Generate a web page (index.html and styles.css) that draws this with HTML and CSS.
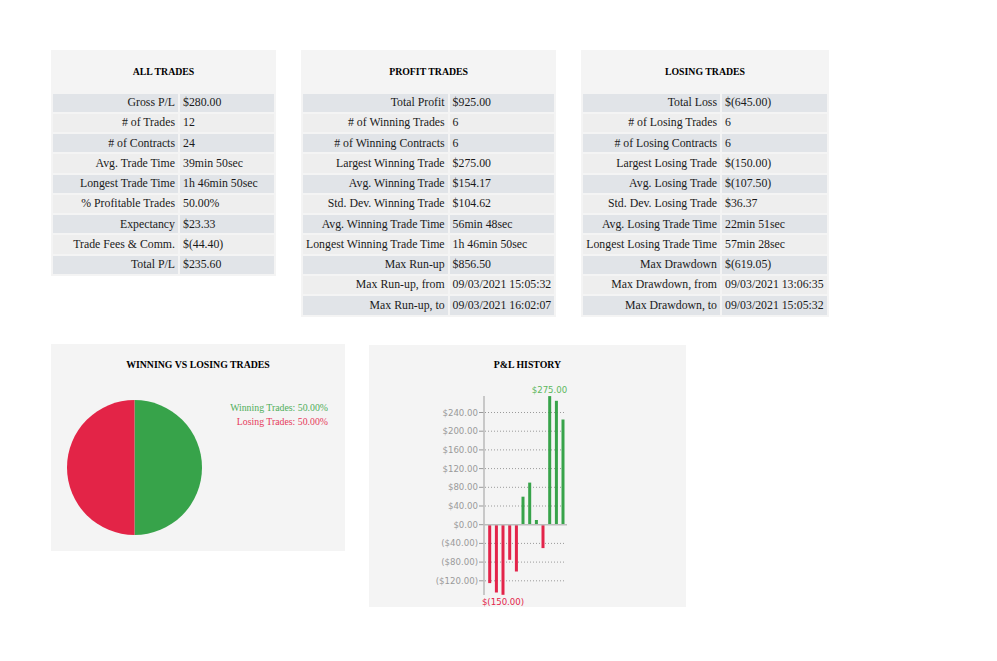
FILE: index.html
```html
<!DOCTYPE html>
<html>
<head>
<meta charset="utf-8">
<link rel="stylesheet" href="styles.css">
</head>
<body>
<div class="page">
  <div class="tables">
    <div class="card">
      <div class="card-title">ALL TRADES</div>
      <table class="stats stats-all">
        <tr><td class="lbl">Gross P/L</td><td class="val">$280.00</td></tr>
        <tr><td class="lbl"># of Trades</td><td class="val">12</td></tr>
        <tr><td class="lbl"># of Contracts</td><td class="val">24</td></tr>
        <tr><td class="lbl">Avg. Trade Time</td><td class="val">39min 50sec</td></tr>
        <tr><td class="lbl">Longest Trade Time</td><td class="val">1h 46min 50sec</td></tr>
        <tr><td class="lbl">% Profitable Trades</td><td class="val">50.00%</td></tr>
        <tr><td class="lbl">Expectancy</td><td class="val">$23.33</td></tr>
        <tr><td class="lbl">Trade Fees &amp; Comm.</td><td class="val">$(44.40)</td></tr>
        <tr><td class="lbl">Total P/L</td><td class="val">$235.60</td></tr>
      </table>
    </div>
    <div class="card">
      <div class="card-title">PROFIT TRADES</div>
      <table class="stats">
        <tr><td class="lbl">Total Profit</td><td class="val">$925.00</td></tr>
        <tr><td class="lbl"># of Winning Trades</td><td class="val">6</td></tr>
        <tr><td class="lbl"># of Winning Contracts</td><td class="val">6</td></tr>
        <tr><td class="lbl">Largest Winning Trade</td><td class="val">$275.00</td></tr>
        <tr><td class="lbl">Avg. Winning Trade</td><td class="val">$154.17</td></tr>
        <tr><td class="lbl">Std. Dev. Winning Trade</td><td class="val">$104.62</td></tr>
        <tr><td class="lbl">Avg. Winning Trade Time</td><td class="val">56min 48sec</td></tr>
        <tr><td class="lbl">Longest Winning Trade Time</td><td class="val">1h 46min 50sec</td></tr>
        <tr><td class="lbl">Max Run-up</td><td class="val">$856.50</td></tr>
        <tr><td class="lbl">Max Run-up, from</td><td class="val">09/03/2021 15:05:32</td></tr>
        <tr><td class="lbl">Max Run-up, to</td><td class="val">09/03/2021 16:02:07</td></tr>
      </table>
    </div>
    <div class="card">
      <div class="card-title">LOSING TRADES</div>
      <table class="stats">
        <tr><td class="lbl">Total Loss</td><td class="val">$(645.00)</td></tr>
        <tr><td class="lbl"># of Losing Trades</td><td class="val">6</td></tr>
        <tr><td class="lbl"># of Losing Contracts</td><td class="val">6</td></tr>
        <tr><td class="lbl">Largest Losing Trade</td><td class="val">$(150.00)</td></tr>
        <tr><td class="lbl">Avg. Losing Trade</td><td class="val">$(107.50)</td></tr>
        <tr><td class="lbl">Std. Dev. Losing Trade</td><td class="val">$36.37</td></tr>
        <tr><td class="lbl">Avg. Losing Trade Time</td><td class="val">22min 51sec</td></tr>
        <tr><td class="lbl">Longest Losing Trade Time</td><td class="val">57min 28sec</td></tr>
        <tr><td class="lbl">Max Drawdown</td><td class="val">$(619.05)</td></tr>
        <tr><td class="lbl">Max Drawdown, from</td><td class="val">09/03/2021 13:06:35</td></tr>
        <tr><td class="lbl">Max Drawdown, to</td><td class="val">09/03/2021 15:05:32</td></tr>
      </table>
    </div>
  </div>

  <div class="charts">
    <div class="card card-pie">
      <div class="card-title">WINNING VS LOSING TRADES</div>
      <div class="pie-body">
        <svg class="pie" width="135" height="135" viewBox="0 0 135 135">
          <path d="M67.5 0 A67.5 67.5 0 0 1 67.5 135 Z" fill="#37a34a"/>
          <path d="M67.5 135 A67.5 67.5 0 0 1 67.5 0 Z" fill="#e32447"/>
        </svg>
        <div class="legend">
          <div class="legend-win">Winning Trades: 50.00%</div>
          <div class="legend-lose">Losing Trades: 50.00%</div>
        </div>
      </div>
    </div>
    <div class="card card-bar">
      <div class="card-title">P&amp;L HISTORY</div>
      <svg class="bars" width="317" height="222" viewBox="0 0 317 222">
        <g class="grid">
          <line x1="116" y1="27.5" x2="197" y2="27.5"/>
          <line x1="116" y1="46.2" x2="197" y2="46.2"/>
          <line x1="116" y1="64.9" x2="197" y2="64.9"/>
          <line x1="116" y1="83.6" x2="197" y2="83.6"/>
          <line x1="116" y1="102.3" x2="197" y2="102.3"/>
          <line x1="116" y1="121" x2="197" y2="121"/>
          <line x1="116" y1="158.4" x2="197" y2="158.4"/>
          <line x1="116" y1="177.1" x2="197" y2="177.1"/>
          <line x1="116" y1="195.8" x2="197" y2="195.8"/>
        </g>
        <g class="ticks">
          <line x1="110" y1="27.5" x2="115" y2="27.5"/>
          <line x1="110" y1="46.2" x2="115" y2="46.2"/>
          <line x1="110" y1="64.9" x2="115" y2="64.9"/>
          <line x1="110" y1="83.6" x2="115" y2="83.6"/>
          <line x1="110" y1="102.3" x2="115" y2="102.3"/>
          <line x1="110" y1="121" x2="115" y2="121"/>
          <line x1="110" y1="139.7" x2="115" y2="139.7"/>
          <line x1="110" y1="158.4" x2="115" y2="158.4"/>
          <line x1="110" y1="177.1" x2="115" y2="177.1"/>
          <line x1="110" y1="195.8" x2="115" y2="195.8"/>
        </g>
        <g class="ylabels">
          <text x="109" y="27.5">$240.00</text>
          <text x="109" y="46.2">$200.00</text>
          <text x="109" y="64.9">$160.00</text>
          <text x="109" y="83.6">$120.00</text>
          <text x="109" y="102.3">$80.00</text>
          <text x="109" y="121">$40.00</text>
          <text x="109" y="139.7">$0.00</text>
          <text x="109" y="158.4">($40.00)</text>
          <text x="109" y="177.1">($80.00)</text>
          <text x="109" y="195.8">($120.00)</text>
        </g>
        <g class="neg">
          <rect x="119.2" y="139.7" width="3" height="58.4"/>
          <rect x="125.9" y="139.7" width="3" height="67.8"/>
          <rect x="132.5" y="139.7" width="3" height="70.1"/>
          <rect x="139.2" y="139.7" width="3" height="35.1"/>
          <rect x="145.9" y="139.7" width="3" height="46.8"/>
          <rect x="172.5" y="139.7" width="3" height="23.4"/>
        </g>
        <g class="pos">
          <rect x="152.5" y="111.7" width="3" height="28"/>
          <rect x="159.2" y="97.6" width="3" height="42.1"/>
          <rect x="165.9" y="135" width="3" height="4.7"/>
          <rect x="179.2" y="11.1" width="3" height="128.6"/>
          <rect x="185.9" y="15.8" width="3" height="123.9"/>
          <rect x="192.5" y="34.5" width="3" height="105.2"/>
        </g>
        <line class="axis" x1="115" y1="11" x2="115" y2="210"/>
        <line class="axis" x1="115" y1="139.7" x2="198" y2="139.7"/>
        <text class="peak-label" x="180.5" y="5">$275.00</text>
        <text class="low-label" x="134" y="217">$(150.00)</text>
      </svg>
    </div>
  </div>
</div>
</body>
</html>
```

FILE: styles.css
```css
html, body {
  margin: 0;
  padding: 0;
  background: #ffffff;
}

.page {
  padding: 50px 0 0 51px;
  font-family: "Liberation Serif", "Times New Roman", serif;
  color: #1a1a1a;
}

.tables {
  display: flex;
  align-items: flex-start;
  gap: 25px;
}

.card {
  background: #f4f4f4;
}

.card-title {
  height: 40px;
  display: flex;
  align-items: center;
  justify-content: center;
  font-weight: bold;
  font-size: 9.8px;
  color: #000;
}

.tables .card-title {
  height: 42px;
}

.stats {
  border-collapse: separate;
  border-spacing: 2px;
  margin-top: -0.5px;
  font-size: 11.8px;
  line-height: 13.4px;
}

.stats-all {
  width: 225px;
}

.stats-all .lbl {
  width: 119px;
}

.stats td {
  padding: 2.45px 3px;
  white-space: nowrap;
}

.stats .lbl {
  text-align: right;
}

.stats .val {
  text-align: left;
}

.stats tr:nth-child(odd) td {
  background: #e1e4e8;
}

.stats tr:nth-child(even) td {
  background: #eeeeee;
}

.charts {
  display: flex;
  align-items: flex-start;
  gap: 24px;
  margin-top: 27px;
}

.card-pie {
  width: 294px;
  height: 207px;
}

.card-pie .card-title {
  height: 42px;
}

.pie-body {
  display: flex;
  align-items: flex-start;
  height: 165px;
}

.pie {
  display: block;
  margin: 14px 0 0 15.7px;
}

.legend {
  margin-left: auto;
  margin-right: 17px;
  margin-top: 15px;
  text-align: right;
  font-size: 9.8px;
  line-height: 14px;
}

.legend-win {
  color: #4fae5a;
}

.legend-lose {
  color: #e6395b;
}

.card-bar {
  width: 317px;
  height: 262px;
  margin-top: 1px;
}

.card-bar .card-title {
  height: 39px;
}

.bars {
  display: block;
  overflow: visible;
  margin-top: 1.5px;
}

.grid line {
  stroke: #9a9a9a;
  stroke-width: 1;
  stroke-dasharray: 1 2;
}

.ticks line {
  stroke: #999999;
  stroke-width: 1;
}

.axis {
  stroke: #bdbdbd;
  stroke-width: 1.6;
}

.ylabels text {
  font-family: "DejaVu Sans", sans-serif;
  font-size: 8.6px;
  fill: #9a9a9a;
  text-anchor: end;
  dominant-baseline: central;
}

.neg rect {
  fill: #e3244a;
}

.pos rect {
  fill: #37a34a;
}

.peak-label,
.low-label {
  font-family: "DejaVu Sans", sans-serif;
  font-size: 8.6px;
  text-anchor: middle;
  dominant-baseline: central;
}

.peak-label {
  fill: #5cb85c;
}

.low-label {
  fill: #e3244a;
}
```
